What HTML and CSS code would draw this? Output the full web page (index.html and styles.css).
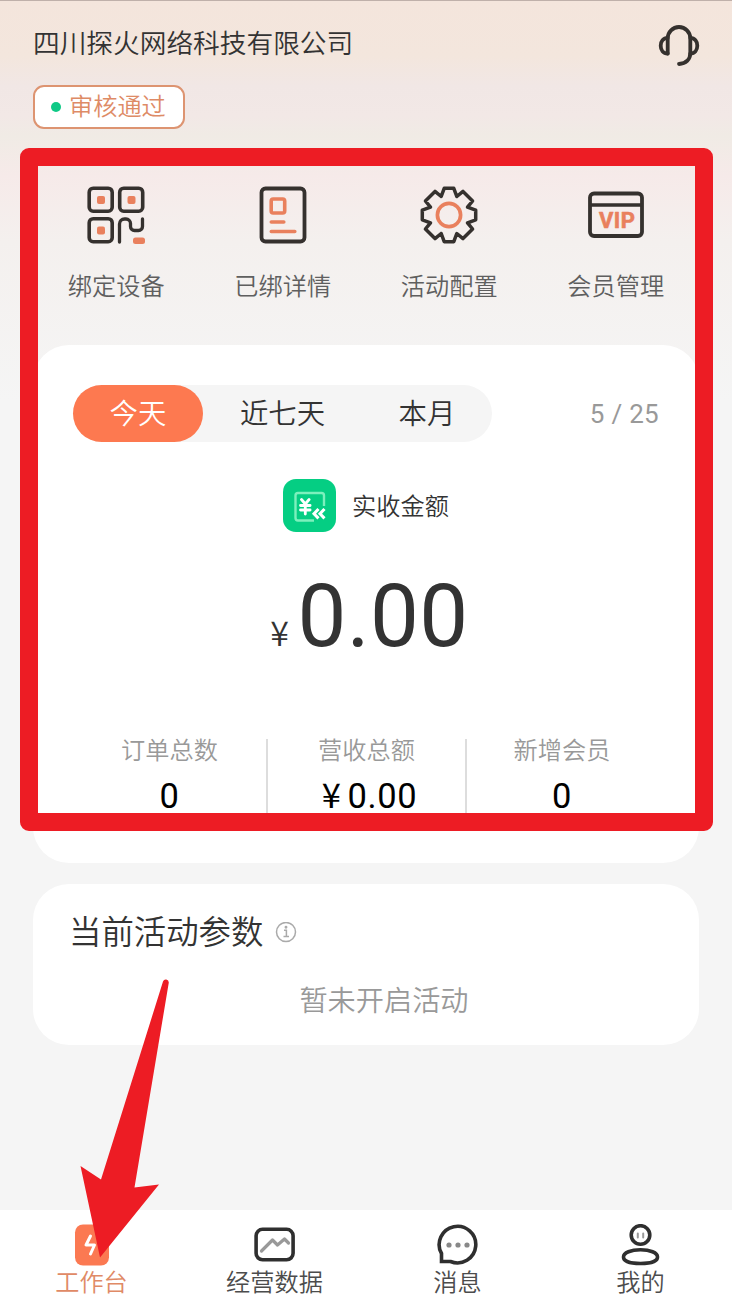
FILE: index.html
```
<!DOCTYPE html>
<html lang="zh-CN">

<head>
    <meta charset="UTF-8">
    <meta name="viewport" content="width=device-width, initial-scale=1.0">
    <title>工作台</title>
    <link rel="stylesheet" href="styles.css">
</head>

<body>
    <div class="app">

        <!--* Header -->
        <header class="header">
            <div class="company">
                <h1>四川探火网络科技有限公司</h1>
                <div class="status"><span class="status-dot"></span><span>审核通过</span></div>
            </div>
            <svg class="service-icon" width="42" height="44" viewBox="0 0 42 44" fill="none" stroke="#35312e" stroke-width="3.8" stroke-linecap="round" stroke-linejoin="round">
                <path d="M9.700 30.500V15.300a11.300 11.300 0 0 1 22.600 0v14.500c0 7-4.500 10.800-11.300 11.200" />
                <path d="M9.700 15c-4.500 0-7 3.500-7 7.700s2.500 7.800 7 7.800M32.300 15c4.500 0 7 3.500 7 7.700s-2.500 7.800-7 7.800" />
            </svg>
        </header>

        <!--* Quick actions -->
        <nav class="actions">
            <a class="action">
                <svg width="60" height="60" viewBox="0 0 60 60" fill="none" stroke="#35312e" stroke-width="3.6" stroke-linecap="round">
                    <rect x="3.200" y="3.200" width="23" height="23" rx="4" />
                    <rect x="33.700" y="3.200" width="23" height="23" rx="4" />
                    <rect x="3.200" y="33.700" width="23" height="23" rx="4" />
                    <path d="M33.500 57V39a5 5 0 0 1 5-5h1.500a4.500 4.500 0 0 1 4.500 4.500v3a4 4 0 0 0 4 4h4a4 4 0 0 0 4-4V34" stroke-width="3.300" />
                    <g fill="#e9805d" stroke="none">
                        <rect x="11" y="11" width="8" height="8" rx="2" />
                        <rect x="41.500" y="11" width="8" height="8" rx="2" />
                        <rect x="11" y="41.500" width="8" height="8" rx="2" />
                        <rect x="47" y="52.500" width="12" height="6.500" rx="2.500" />
                    </g>
                </svg>
                <span>绑定设备</span>
            </a>
            <a class="action">
                <svg width="60" height="60" viewBox="0 0 60 60" fill="none" stroke-linecap="round">
                    <rect x="8.500" y="3.500" width="43" height="53" rx="4" stroke="#35312e" stroke-width="3.800" />
                    <g stroke="#e9805d" stroke-width="3.600">
                        <rect x="18.200" y="14" width="13.500" height="14" rx="2" />
                        <path d="M18.300 37h12.500M18.300 46.500h23.500" />
                    </g>
                </svg>
                <span>已绑详情</span>
            </a>
            <a class="action">
                <svg width="60" height="60" viewBox="-30 -30 60 60" fill="none" stroke-linejoin="round">
                    <path d="M-4.800-26.700H4.800L7.800-18.500 14-23.600 23.600-14 18.500-7.800 26.700-4.800V4.800L18.500 7.800 23.600 14 14 23.600 7.800 18.500 4.800 26.700H-4.800L-7.800 18.500-14 23.600-23.600 14-18.500 7.800-26.700 4.800V-4.800L-18.500-7.800-23.600-14-14-23.600-7.800-18.500z" stroke="#35312e" stroke-width="3.500" />
                    <circle r="11.600" stroke="#e9805d" stroke-width="3.700" />
                </svg>
                <span>活动配置</span>
            </a>
            <a class="action">
                <svg width="60" height="60" viewBox="0 0 60 60">
                    <rect x="4" y="8.500" width="52" height="42.500" rx="4" fill="none" stroke="#35312e" stroke-width="3.800" />
                    <path d="M4 20h52" stroke="#35312e" stroke-width="3.600" />
                    <text class="vip" x="31.200" y="42.700" text-anchor="middle">VIP</text>
                </svg>
                <span>会员管理</span>
            </a>
        </nav>

        <!--* Income summary -->
        <section class="card income">
            <div class="income-top">
                <div class="tabs">
                    <span class="tab active">今天</span>
                    <span class="tab wide">近七天</span>
                    <span class="tab">本月</span>
                </div>
                <span class="counter">5 / 25</span>
            </div>

            <div class="income-label">
                <svg width="53" height="53" viewBox="0 0 53 53" fill="none">
                    <rect width="53" height="53" rx="13" fill="#05ce83" />
                    <path d="M31 41.500H15a2.500 2.500 0 0 1-2.500-2.500V16.500A2.500 2.500 0 0 1 15 14h23.500a2.500 2.500 0 0 1 2.500 2.500V27" stroke="#7cf0bd" stroke-width="2.400" />
                    <g stroke="#fff" stroke-width="2.800" stroke-linecap="round">
                        <path d="M18.500 20.500l3.800 4.500 3.800-4.500M22.300 25v10M17.500 26.500h9.600M17.500 31h9.600" />
                        <path d="M35.500 30l-4.500 4.700 4.500 4.700M41.500 30l-4.500 4.700 4.500 4.700" stroke-width="3" stroke-linecap="butt" />
                    </g>
                </svg>
                <span>实收金额</span>
            </div>

            <div class="amount"><span class="yen">¥</span>0.00</div>

            <div class="stats">
                <div class="stat">
                    <span class="stat-name">订单总数</span>
                    <span class="stat-value">0</span>
                </div>
                <div class="stat">
                    <span class="stat-name">营收总额</span>
                    <span class="stat-value money"><span class="stat-yen">¥</span>0.00</span>
                </div>
                <div class="stat">
                    <span class="stat-name">新增会员</span>
                    <span class="stat-value">0</span>
                </div>
            </div>
        </section>

        <!--* Current campaign -->
        <section class="card campaign">
            <h2>
                当前活动参数
                <svg width="22" height="22" viewBox="0 0 22 22" fill="none" stroke="#aaa" stroke-width="1.500">
                    <circle cx="11" cy="10" r="9.500" />
                    <path d="M9 8.200h2.400v6M8.500 14.500h5.500" />
                    <circle cx="11" cy="5.200" r=".7" />
                </svg>
            </h2>
            <p>暂未开启活动</p>
        </section>

        <!--* Bottom bar -->
        <nav class="tabbar">
            <a class="tabbar-item current">
                <svg width="42" height="42" viewBox="0 0 42 42" fill="none">
                    <rect x="4" y=".5" width="34" height="41" rx="8" fill="#fb7952" />
                    <path d="M19.500 12l-4.500 9h8.500l-4 9" stroke="#fff" stroke-width="3" stroke-linecap="round" stroke-linejoin="round" />
                </svg>
                <span>工作台</span>
            </a>
            <a class="tabbar-item">
                <svg width="42" height="42" viewBox="0 0 42 42" fill="none" stroke-linecap="round" stroke-linejoin="round">
                    <rect x="2.100" y="5.300" width="37" height="30.500" rx="6.500" stroke="#2f2f2f" stroke-width="3.600" />
                    <path d="M7.500 27l11-11 5 5 7-6 4 4" stroke="#999" stroke-width="3.200" />
                </svg>
                <span>经营数据</span>
            </a>
            <a class="tabbar-item">
                <svg width="42" height="42" viewBox="0 0 42 42" fill="none">
                    <path d="M4.500 37.500V29.500A18.300 18.300 0 1 1 13.500 37.500z" stroke="#2f2f2f" stroke-width="3.600" />
                    <g fill="#888">
                        <circle cx="12" cy="21" r="2.600" />
                        <circle cx="21" cy="21" r="2.600" />
                        <circle cx="30" cy="21" r="2.600" />
                    </g>
                </svg>
                <span>消息</span>
            </a>
            <a class="tabbar-item">
                <svg width="42" height="42" viewBox="0 0 42 42" fill="none" stroke="#2f2f2f" stroke-width="3.600">
                    <circle cx="20.500" cy="11" r="9.300" />
                    <path d="M3.500 33C3.500 28.500 11 25.800 20.500 25.800S37.500 28.500 37.500 33 30 39.500 20.500 39.500 3.500 37.500 3.500 33z" />
                    <path d="M17.800 9.500v4M23.200 9.500v4" stroke="#999" stroke-width="2" stroke-linecap="round" />
                </svg>
                <span>我的</span>
            </a>
        </nav>

        <!--* Guide marks over the page -->
        <div class="highlight"></div>
        <svg class="pointer" width="82" height="282" viewBox="0 0 82 282">
            <path d="M83 2.500a3 3 0 0 1 5.800 1L54.500 208.500 79 205.500 20 278.500.5 187 21 200.500z" fill="#ed1c24" />
        </svg>
    </div>
</body>

</html>
```
FILE: styles.css
```
* {
    box-sizing: border-box;
}

body {
    margin: 0;
    font-family: Roboto, "Noto Sans CJK SC", sans-serif;
    font-weight: 350;
    background-color: #f5f5f5;
    color: #333;
}

h1,
h2,
p {
    margin: 0;
    font-weight: 350;
}

svg {
    display: block;
    flex-shrink: 0;
}

.app {
    position: relative;
    display: flex;
    flex-direction: column;
    width: 732px;
    height: 1304px;
    overflow: hidden;
    border-top: 1px solid #bfb0aa;
    background: linear-gradient(#f4e5dc 0, #f3e6dd 55px, #f1e7e5 85px, #f2e8e6 115px, #f0ebe5 135px, #f6eae9 175px, #f4f0ee 240px, #f5f5f5 400px);
}

.header {
    display: flex;
    justify-content: space-between;
    height: 164px;
    padding: 22px 32px 0 33px;
}

.company h1 {
    height: 40px;
    font-size: 26.7px;
    line-height: 42px;
}

.status {
    display: flex;
    align-items: center;
    gap: 8px;
    width: 152px;
    height: 44px;
    margin-top: 22px;
    padding-left: 16px;
    border: 2px solid #dd9471;
    border-radius: 11px;
    background-color: #fff;
    color: #de8b66;
    font-size: 24.2px;
    line-height: 42px;
}

.status-dot {
    width: 10px;
    height: 10px;
    background-color: #0fc986;
    border-radius: 50%;
}

.actions {
    display: grid;
    grid-template-columns: repeat(4, 1fr);
    height: 180px;
    padding: 20px 33px 0;
}

.action {
    display: flex;
    flex-direction: column;
    align-items: center;
    gap: 24px;
    color: #5f5f5f;
    font-size: 24.2px;
    line-height: 36px;
}

.vip {
    fill: #e9805d;
    stroke: #e9805d;
    stroke-width: 0.6px;
    stroke-linejoin: round;
    font-family: Roboto, sans-serif;
    font-size: 22px;
    font-weight: 700;
    letter-spacing: 0.5px;
}

.card {
    margin: 0 33px;
    border-radius: 36px;
    background-color: #fff;
}

.income {
    height: 518px;
    padding: 40px 38px 0;
}

.income-top {
    display: flex;
    justify-content: space-between;
    align-items: center;
    height: 57px;
    padding: 0 2px;
}

.tabs {
    display: flex;
    height: 57px;
    border-radius: 29px;
    background-color: #f5f5f5;
    font-size: 28.4px;
    line-height: 60px;
    text-align: center;
}

.tab {
    width: 130px;
    height: 57px;
}

.tab.wide {
    width: 159px;
}

.tab.active {
    border-radius: 29px;
    background-color: #fd7950;
    color: #fff;
}

.counter {
    color: #999;
    font-size: 26px;
    font-weight: 400;
    letter-spacing: 0.3px;
}

.income-label {
    display: flex;
    justify-content: center;
    align-items: center;
    gap: 16px;
    margin-top: 37px;
    font-size: 24.2px;
}

.income-label span {
    margin-top: -2px;
}

.amount {
    display: flex;
    justify-content: center;
    align-items: baseline;
    height: 104px;
    margin-top: 32px;
    padding-left: 7px;
    font-size: 87px;
    font-weight: 400;
    line-height: 104px;
    letter-spacing: 0.4px;
}

.yen {
    margin-right: 8px;
    font-family: "Noto Sans CJK SC", sans-serif;
    font-size: 34px;
    font-weight: 350;
    line-height: 40px;
}

.stats {
    display: grid;
    grid-template-columns: 195px 199px 192px;
    height: 74px;
    margin-top: 71px;
}

.stat {
    display: flex;
    flex-direction: column;
    align-items: center;
}

.stat:first-child {
    padding-left: 2px;
}

.stat + .stat {
    border-left: 2px solid #ddd;
}

.stat-name {
    color: #999;
    font-size: 24.2px;
    line-height: 24px;
}

.stat-value {
    margin-top: 12px;
    color: #000;
    font-size: 34.5px;
    font-weight: 400;
    line-height: 42px;
    letter-spacing: 0.6px;
}

.stat-value.money {
    padding-left: 6px;
}

.stat-yen {
    margin-right: 6px;
    font-family: "Noto Sans CJK SC", sans-serif;
    line-height: 1;
}

.campaign {
    height: 161px;
    margin-top: 21px;
    padding: 25px 36px 0;
}

.campaign h2 {
    display: flex;
    align-items: center;
    gap: 12px;
    font-size: 32.4px;
    line-height: 48px;
}

.campaign p {
    margin-top: 25px;
    padding-left: 36px;
    color: #999;
    font-size: 28.2px;
    line-height: 40px;
    text-align: center;
}

.tabbar {
    display: grid;
    grid-template-columns: repeat(4, 1fr);
    height: 94px;
    margin-top: auto;
    padding-top: 14px;
    background-color: #fff;
}

.tabbar-item {
    display: flex;
    flex-direction: column;
    align-items: center;
    color: #4c4c4c;
    font-size: 24.2px;
    line-height: 35px;
}

.tabbar-item.current {
    color: #e08a66;
}

.highlight {
    position: absolute;
    top: 147px;
    left: 20px;
    width: 693px;
    height: 683px;
    border: 18px solid #ed1c24;
    border-radius: 9px;
}

.pointer {
    position: absolute;
    top: 978px;
    left: 80px;
    overflow: visible;
}
```
